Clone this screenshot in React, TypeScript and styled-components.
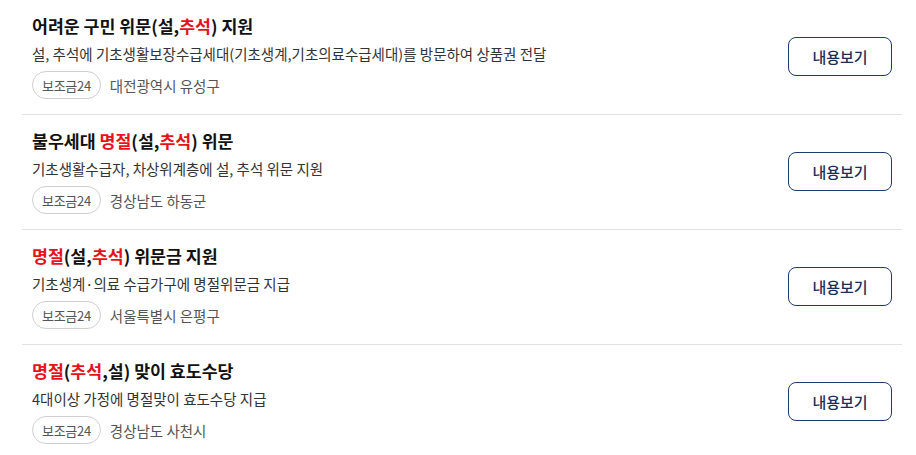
import React from "react";
import styled, { createGlobalStyle } from "styled-components";

const Global = createGlobalStyle`
  html, body { margin: 0; padding: 0; background: #fff; }
  body { font-family: "Noto Sans CJK KR", "Noto Sans", sans-serif; color: #111; }
  * { box-sizing: border-box; }
`;

const List = styled.ul`
  list-style: none;
  margin: 0 0 0 22px;
  padding: 0;
  width: 880px;
`;

const Row = styled.li`
  display: flex;
  align-items: center;
  justify-content: space-between;
  padding: 14px 10px 15px 10px;
  border-bottom: 1px solid #e2e2e2;
  &:last-child { border-bottom: none; }
`;

const Body = styled.div`
  display: flex;
  flex-direction: column;
`;

const Title = styled.h3`
  margin: 0;
  font-size: 17.3px;
  font-weight: 700;
  line-height: 24px;
  color: #111;
`;

const Red = styled.span`
  color: #e5121c;
`;

const Desc = styled.p`
  margin: 5px 0 0;
  font-size: 14.5px;
  line-height: 22px;
  color: #333;
`;

const Meta = styled.div`
  display: flex;
  align-items: center;
  gap: 9px;
  margin-top: 6px;
`;

const Tag = styled.span`
  display: inline-flex;
  align-items: center;
  height: 28px;
  padding: 0 9px;
  border: 1px solid #cfcfcf;
  border-radius: 14px;
  font-size: 13px;
  color: #555;
  letter-spacing: -0.3px;
`;

const Place = styled.span`
  font-size: 14.5px;
  color: #555;
`;

const ViewButton = styled.button`
  width: 104px;
  height: 39px;
  border: 1.5px solid #1d3a6d;
  border-radius: 8px;
  background: #fff;
  color: #1a2e57;
  font-family: inherit;
  font-size: 15px;
  font-weight: 500;
  cursor: pointer;
`;

type Item = { title: React.ReactNode; desc: string; place: string };

const items: Item[] = [
  {
    title: (
      <>
        어려운 구민 위문(설,<Red>추석</Red>) 지원
      </>
    ),
    desc: "설, 추석에 기초생활보장수급세대(기초생계,기초의료수급세대)를 방문하여 상품권 전달",
    place: "대전광역시 유성구",
  },
  {
    title: (
      <>
        불우세대 <Red>명절</Red>(설,<Red>추석</Red>) 위문
      </>
    ),
    desc: "기초생활수급자, 차상위계층에 설, 추석 위문 지원",
    place: "경상남도 하동군",
  },
  {
    title: (
      <>
        <Red>명절</Red>(설,<Red>추석</Red>) 위문금 지원
      </>
    ),
    desc: "기초생계·의료 수급가구에 명절위문금 지급",
    place: "서울특별시 은평구",
  },
  {
    title: (
      <>
        <Red>명절</Red>(<Red>추석</Red>,설) 맞이 효도수당
      </>
    ),
    desc: "4대이상 가정에 명절맞이 효도수당 지급",
    place: "경상남도 사천시",
  },
];

export default function App() {
  return (
    <>
      <Global />
      <List>
        {items.map((it, i) => (
          <Row key={i}>
            <Body>
              <Title>{it.title}</Title>
              <Desc>{it.desc}</Desc>
              <Meta>
                <Tag>보조금24</Tag>
                <Place>{it.place}</Place>
              </Meta>
            </Body>
            <ViewButton>내용보기</ViewButton>
          </Row>
        ))}
      </List>
    </>
  );
}
